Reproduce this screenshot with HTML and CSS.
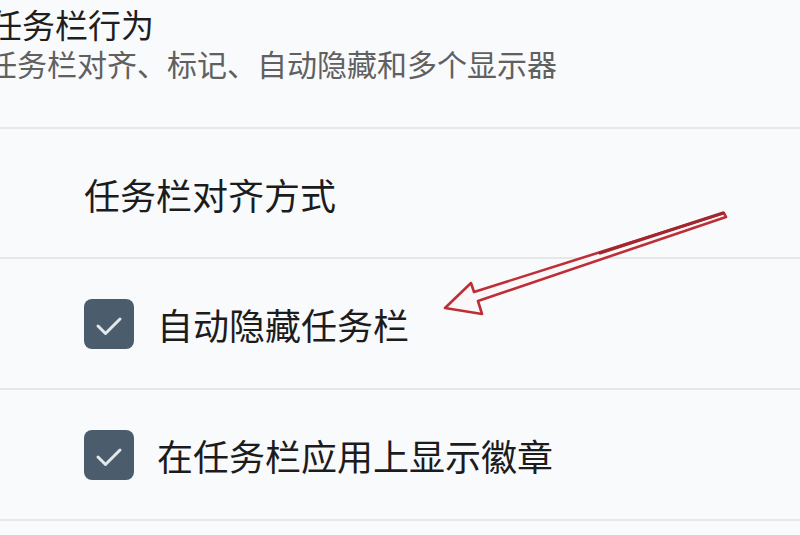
FILE: index.html
```html
<!DOCTYPE html>
<html lang="zh-CN">
<head>
<meta charset="utf-8">
<title>任务栏行为</title>
<link rel="stylesheet" href="styles.css">
</head>
<body>
<div class="page">
  <header class="group-header">
    <div class="title">任务栏行为</div>
    <div class="subtitle">任务栏对齐、标记、自动隐藏和多个显示器</div>
  </header>
  <div class="row row-plain">
    <span class="label">任务栏对齐方式</span>
  </div>
  <div class="row">
    <span class="checkbox"><svg viewBox="0 0 50 50" width="50" height="50"><path d="M14 27 L21.5 34.5 L36 20" fill="none" stroke="#e3e8ed" stroke-width="3" stroke-linecap="round" stroke-linejoin="round"/></svg></span>
    <span class="label">自动隐藏任务栏</span>
  </div>
  <div class="row">
    <span class="checkbox"><svg viewBox="0 0 50 50" width="50" height="50"><path d="M14 27 L21.5 34.5 L36 20" fill="none" stroke="#e3e8ed" stroke-width="3" stroke-linecap="round" stroke-linejoin="round"/></svg></span>
    <span class="label">在任务栏应用上显示徽章</span>
  </div>
  <svg class="annotation" viewBox="0 0 800 535" width="800" height="535">
    <polygon points="724,213 474,292 471,283 445,308 482,314 478,301 726,217" fill="#fbf7f8" stroke="#bd2f37" stroke-width="2.6" stroke-linejoin="round"/>
    <line x1="723" y1="213" x2="600" y2="253" stroke="#a1262d" stroke-width="3.2" stroke-linecap="round"/>
  </svg>
</div>
</body>
</html>
```

FILE: styles.css
```css
html, body {
  margin: 0;
  padding: 0;
  background: #f9fafc;
}

body {
  font-family: "Noto Sans CJK SC", "Noto Sans", sans-serif;
  color: #1c1c1c;
  width: 800px;
  height: 535px;
  overflow: hidden;
}

.page {
  position: relative;
  width: 800px;
  height: 535px;
}

.group-header {
  height: 129px;
  padding-top: 6px;
  box-sizing: border-box;
  margin-left: -11px;
  border-bottom: 2px solid #e6e7e9;
  display: flex;
  flex-direction: column;
  gap: 4px;
}

.title {
  font-size: 33px;
  line-height: 36px;
  color: #1e1e1e;
  white-space: nowrap;
}

.subtitle {
  font-size: 30px;
  line-height: 34px;
  color: #606060;
  white-space: nowrap;
  margin-left: -2px;
}

.row {
  height: 131px;
  box-sizing: border-box;
  border-bottom: 2px solid #e6e7e9;
  display: flex;
  align-items: center;
  padding-left: 84px;
  gap: 23px;
}

.row-plain {
  height: 130px;
  padding-top: 2px;
}

.label {
  font-size: 36px;
  line-height: 40px;
  color: #1c1c1c;
  white-space: nowrap;
}

.checkbox {
  width: 50px;
  height: 50px;
  border-radius: 8px;
  background: #4b5c6d;
  display: flex;
  flex-shrink: 0;
}

.checkbox svg {
  display: block;
}

.annotation {
  position: absolute;
  left: 0;
  top: 0;
  pointer-events: none;
}
```
